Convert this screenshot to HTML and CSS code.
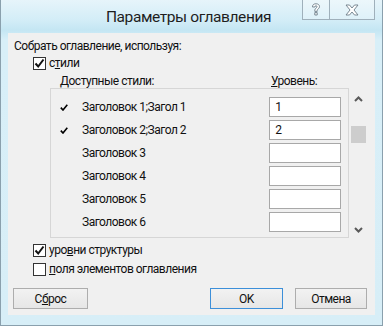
FILE: index.html
```html
<!DOCTYPE html>
<html lang="ru">
<head>
<meta charset="utf-8">
<title>Параметры оглавления</title>
<link rel="stylesheet" href="styles.css">
</head>
<body>
<div class="window">
  <div class="titlebar">
    <div class="tspacer"></div>
    <div class="title">Параметры оглавления</div>
    <div class="tbtns">
      <div class="tb help">
        <svg width="10" height="13" viewBox="0 0 10 13"><path d="M1.5 4 C1.5 1.5 3 0.8 5 0.8 C7.2 0.8 8.5 2 8.5 3.6 C8.5 5.6 6.2 6 6.2 7.6 L6.2 8.4 L3.8 8.4 L3.8 7.2 C3.8 5.3 6 5 6 3.7 C6 3 5.6 2.7 5 2.7 C4.3 2.7 3.9 3.1 3.9 4 Z M3.8 9.6 L6.2 9.6 L6.2 12 L3.8 12 Z" fill="#fff" stroke="#6d7d88" stroke-width="0.9"/></svg>
      </div>
      <div class="tb close">
        <svg width="14" height="12" viewBox="0 0 14 12"><path d="M1 1 L4.5 1 L7 4 L9.5 1 L13 1 L9 6 L13 11 L9.5 11 L7 8 L4.5 11 L1 11 L5 6 Z" fill="#fff" stroke="#6d7d88" stroke-width="0.9" stroke-linejoin="round"/></svg>
      </div>
    </div>
  </div>
  <div class="panel">
    <div class="caption">Собрать оглавление, используя:</div>
    <div class="chk chk-styles">
      <span class="box"><svg width="11" height="11" viewBox="0 0 11 11"><path d="M1.5 5.5 L4.2 8.5 L9.5 1.5" fill="none" stroke="#111" stroke-width="2"/></svg></span>
      <span>с<u>т</u>или</span>
    </div>
    <div class="heads">
      <span class="h-styles">Доступные стили:</span>
      <span class="h-level"><u>У</u>ровень:</span>
    </div>
    <div class="listwrap">
      <div class="list">
        <div class="row"><span class="mark"><svg width="8" height="7" viewBox="0 0 8 7"><path d="M0.8 3.6 L3 6 L7.3 0.8" fill="none" stroke="#000" stroke-width="1.6"/></svg></span><span class="name">Заголовок 1;Загол 1</span><span class="lvl">1</span></div>
        <div class="row"><span class="mark"><svg width="8" height="7" viewBox="0 0 8 7"><path d="M0.8 3.6 L3 6 L7.3 0.8" fill="none" stroke="#000" stroke-width="1.6"/></svg></span><span class="name">Заголовок 2;Загол 2</span><span class="lvl">2</span></div>
        <div class="row"><span class="mark"></span><span class="name">Заголовок 3</span><span class="lvl"></span></div>
        <div class="row"><span class="mark"></span><span class="name">Заголовок 4</span><span class="lvl"></span></div>
        <div class="row"><span class="mark"></span><span class="name">Заголовок 5</span><span class="lvl"></span></div>
        <div class="row"><span class="mark"></span><span class="name">Заголовок 6</span><span class="lvl"></span></div>
      </div>
      <div class="scroll">
        <span class="arrow up"><svg width="9" height="6" viewBox="0 0 9 6"><path d="M1 5 L4.5 1.5 L8 5" fill="none" stroke="#5a5a5a" stroke-width="2"/></svg></span>
        <span class="thumb"></span>
        <span class="track"></span>
        <span class="arrow down"><svg width="9" height="6" viewBox="0 0 9 6"><path d="M1 1 L4.5 4.5 L8 1" fill="none" stroke="#5a5a5a" stroke-width="2"/></svg></span>
      </div>
    </div>
    <div class="chk chk-levels">
      <span class="box"><svg width="11" height="11" viewBox="0 0 11 11"><path d="M1.5 5.5 L4.2 8.5 L9.5 1.5" fill="none" stroke="#111" stroke-width="2"/></svg></span>
      <span>уро<u>в</u>ни структуры</span>
    </div>
    <div class="chk chk-fields">
      <span class="box"></span>
      <span><u>п</u>оля элементов оглавления</span>
    </div>
    <div class="buttons">
      <div class="btn reset">С<u>б</u>рос</div>
      <div class="btn-group">
        <div class="btn ok">OK</div>
        <div class="btn cancel">Отмена</div>
      </div>
    </div>
  </div>
</div>
</body>
</html>
```
FILE: styles.css
```css
html, body {
  margin: 0;
  padding: 0;
  background: #ffffff;
}
.window {
  width: 383px;
  height: 326px;
  box-sizing: border-box;
  border-left: 1px solid #8aa0ad;
  border-right: 1px solid #8aa0ad;
  border-bottom: 1px solid #8aa0ad;
  background: linear-gradient(to bottom, #e6f4fa 0px, #d3edf7 20px, #c4e6f3 30px, #d8eff8 40px, #d7eef7 100%);
  font-family: Roboto, "Noto Sans", "DejaVu Sans", sans-serif;
  font-size: 12px;
  letter-spacing: -0.5px;
  color: #111;
  display: flex;
  flex-direction: column;
}
.titlebar {
  height: 33px;
  display: grid;
  grid-template-columns: 74px 1fr 80px;
  align-items: start;
}
.title {
  font-size: 15.5px;
  letter-spacing: -0.4px;
  line-height: 20px;
  padding-top: 7px;
  text-align: center;
  color: #1e1e1e;
  white-space: nowrap;
}
.tbtns {
  display: flex;
  height: 20px;
  border: 1px solid #9fb0bb;
  border-top: none;
  box-sizing: border-box;
  width: 73px;
}
.tb {
  display: flex;
  align-items: center;
  justify-content: center;
  background: rgba(255, 255, 255, 0.25);
}
.help {
  width: 26px;
  border-right: 1px solid #9fb0bb;
}
.close {
  flex: 1;
}
.panel {
  margin: 0 7px 0 7px;
  height: 282px;
  background: #f0f0f0;
  padding: 0 8px 0 5px;
  display: flex;
  flex-direction: column;
}
.caption {
  margin-top: 5px;
  margin-left: 1px;
  line-height: 16px;
  height: 16px;
}
.chk {
  display: flex;
  align-items: center;
  height: 16px;
  line-height: 16px;
  margin-left: 20px;
}
.chk-styles {
  margin-top: 1px;
}
.box {
  width: 13px;
  height: 13px;
  box-sizing: border-box;
  border: 1px solid #333333;
  background: #ffffff;
  margin-right: 3px;
  display: flex;
  align-items: center;
  justify-content: center;
}
.heads {
  margin-top: 3px;
  height: 14px;
  line-height: 14px;
  display: flex;
}
.h-styles {
  margin-left: 47px;
  width: 211px;
}
.listwrap {
  margin-left: 37px;
  display: flex;
  height: 150px;
}
.list {
  width: 302px;
  box-sizing: border-box;
  border: 1px solid #d6d6d6;
  padding: 8px 0 0 0;
  display: flex;
  flex-direction: column;
  gap: 3px;
}
.row {
  height: 20px;
  display: flex;
  align-items: center;
}
.mark {
  width: 22px;
  padding-left: 9px;
  display: flex;
  align-items: center;
}
.name {
  flex: 1;
}
.lvl {
  width: 72px;
  height: 20px;
  box-sizing: border-box;
  border: 1px solid #a8a8a8;
  background: #ffffff;
  margin-right: 7px;
  padding-left: 5px;
  line-height: 18px;
}
.scroll {
  width: 18px;
  display: flex;
  flex-direction: column;
  align-items: center;
}
.arrow {
  height: 17px;
  display: flex;
  align-items: center;
  justify-content: center;
}
.up {
  margin-top: 2px;
}
.thumb {
  width: 15px;
  height: 17px;
  margin-top: 19px;
  background: #cdcdcd;
}
.track {
  flex: 1;
}
.down {
  margin-bottom: 0px;
}
.chk-levels {
  margin-top: 4px;
}
.chk-fields {
  margin-top: 3px;
}
.buttons {
  margin-top: 11px;
  display: flex;
  justify-content: space-between;
}
.btn-group {
  display: flex;
  gap: 12px;
}
.btn {
  height: 21px;
  box-sizing: border-box;
  border: 1px solid #adadad;
  background: linear-gradient(to bottom, #f2f2f2, #e6e6e6);
  display: flex;
  align-items: center;
  justify-content: center;
  line-height: 16px;
}
.reset {
  width: 75px;
}
.ok {
  width: 73px;
  border-color: #3c8fd9;
}
.cancel {
  width: 72px;
}
```
